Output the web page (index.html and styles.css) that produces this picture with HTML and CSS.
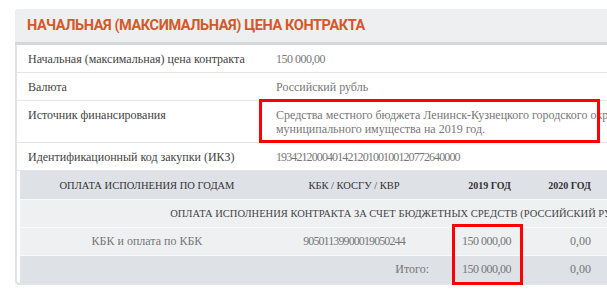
FILE: index.html
```html
<!DOCTYPE html>
<html lang="ru">
<head>
  <meta charset="UTF-8">
  <meta name="viewport" content="width=device-width, initial-scale=1.0">
  <title>Начальная (максимальная) цена контракта</title>
  <link rel="stylesheet" href="styles.css">
</head>
<body>
  <div class="card">
    <div class="card-head">
      <h2>НАЧАЛЬНАЯ (МАКСИМАЛЬНАЯ) ЦЕНА КОНТРАКТА</h2>
    </div>
    <div class="card-body">
      <div class="row">
        <div class="label">Начальная (максимальная) цена контракта</div>
        <div class="value money">150 000,00</div>
      </div>
      <div class="row">
        <div class="label">Валюта</div>
        <div class="value">Российский рубль</div>
      </div>
      <div class="row">
        <div class="label">Источник финансирования</div>
        <div class="value">Средства местного бюджета Ленинск-Кузнецкого городского округа от использования муниципального имущества на 2019 год.</div>
      </div>
      <div class="row">
        <div class="label">Идентификационный код закупки (ИКЗ)</div>
        <div class="value code">193421200040142120100100120772640000</div>
      </div>

      <table class="pay">
        <thead>
          <tr>
            <th class="c1">ОПЛАТА ИСПОЛНЕНИЯ ПО ГОДАМ</th>
            <th class="c2">КБК / КОСГУ / КВР</th>
            <th class="c3 year">2019 ГОД</th>
            <th class="c4 year">2020 ГОД</th>
            <th class="rest"></th>
          </tr>
        </thead>
        <tbody>
          <tr class="sub">
            <td colspan="5">ОПЛАТА ИСПОЛНЕНИЯ КОНТРАКТА ЗА СЧЕТ БЮДЖЕТНЫХ СРЕДСТВ (РОССИЙСКИЙ РУБЛЬ)</td>
          </tr>
          <tr>
            <td>КБК и оплата по КБК</td>
            <td class="code">90501139900019050244</td>
            <td class="num money">150 000,00</td>
            <td class="num">0,00</td>
            <td></td>
          </tr>
          <tr class="total">
            <td colspan="2" class="right">Итого:</td>
            <td class="num money">150 000,00</td>
            <td class="num">0,00</td>
            <td></td>
          </tr>
        </tbody>
      </table>
    </div>

    <!-- выделение важных полей -->
    <div class="mark mark-source"></div>
    <div class="mark mark-sum"></div>
  </div>
</body>
</html>
```

FILE: styles.css
```css
html, body{
  margin: 0;
  padding: 0;
  background-color: #fff;
  overflow: hidden;
}

body{
  font-family: "Liberation Serif", "Times New Roman", serif;
  font-size: 12px;
  color: #555;
}

.card{
  position: relative;
  margin: 9px 0 0 15px;
  width: 770px;
  border-left: 2px solid #e2e3e6;
  border-bottom: 2px solid #e2e3e6;
  border-radius: 4px 0 0 4px;
}
.card-head{
  margin-left: -2px;
  background-color: #eeeff1;
  border-bottom: 3px solid #d6d7da;
  border-radius: 4px 0 0 0;
  height: 33px;
  display: flex;
  align-items: center;
  padding-left: 12px;
}
h2{
  margin: 0;
  font-family: Roboto, "Liberation Sans", sans-serif;
  font-size: 14.5px;
  letter-spacing: -0.4px;
  font-weight: 700;
  color: #d5572a;
}

.row{
  display: flex;
  border-bottom: 1px solid #e4e5e8;
  padding: 7px 0 6px;
  line-height: 14px;
}
.label{
  width: 248px;
  padding-left: 11px;
  color: #444;
  flex: none;
}
.value{
  flex: 1;
  color: #777;
  padding-right: 10px;
}
.code{
  letter-spacing: -0.9px;
}
.money{
  letter-spacing: -0.5px;
}

.pay{
  margin-left: 3px;
  border-collapse: collapse;
  width: 764px;
  table-layout: fixed;
}
.pay th, .pay td{
  text-align: center;
  height: 27px;
  padding: 0;
  border-bottom: 1px solid #fafafa;
}
.pay th{
  background-color: #dee1e6;
  color: #333;
  font-size: 10.5px;
  font-weight: normal;
  height: 28px;
}
.pay .year{
  font-weight: bold;
  font-size: 10px;
}
.pay .year, .pay .num{
  text-align: right;
  padding-right: 10px;
}
.c1{ width: 254px; }
.c2{ width: 160px; }
.c3{ width: 77px; }
.c4{ width: 70px; }
.pay td{
  background-color: #eef0f2;
  color: #777;
}
.pay .sub td{
  color: #444;
  font-size: 10.5px;
}
.pay .total td{
  background-color: #dee1e6;
  border-bottom: 0;
}
.pay .right{
  text-align: right;
  padding-right: 5px;
}

.mark{
  position: absolute;
  border: 3px solid #f00;
  box-sizing: border-box;
}
.mark-source{
  left: 242px;
  top: 90px;
  width: 341px;
  height: 44px;
}
.mark-sum{
  left: 435px;
  top: 215px;
  width: 71px;
  height: 61px;
}
```
